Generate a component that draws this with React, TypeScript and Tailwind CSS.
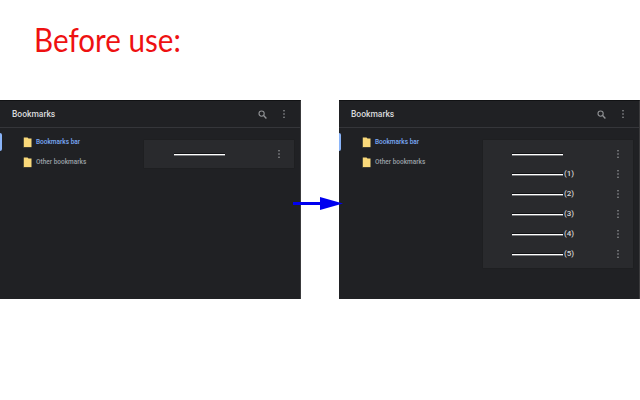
import React from "react";

const Dots = ({ color = "#9a9c9f" }: { color?: string }) => (
  <svg width="4" height="10" viewBox="0 0 4 10" className="block shrink-0">
    <circle cx="2" cy="1.7" r="0.8" fill={color} />
    <circle cx="2" cy="5" r="0.8" fill={color} />
    <circle cx="2" cy="8.3" r="0.8" fill={color} />
  </svg>
);

const Search = () => (
  <svg width="9" height="9" viewBox="0 0 9 9" className="block shrink-0" fill="none" stroke="#8f9194">
    <circle cx="3.6" cy="3.6" r="2.6" strokeWidth="1.1" />
    <path d="M5.6 5.6 L8.4 8.4" strokeWidth="1.4" />
  </svg>
);

const Folder = () => (
  <svg width="9" height="11" viewBox="0 0 9 11" className="block shrink-0">
    <path d="M1 0.5 H4.5 L5.5 1.5 H8.5 V10 H1 Z" fill="#fad97a" />
    <path d="M0.2 0.5 H1 V10 H8.5 V10.6 H0.2 Z" fill="#5f5a3c" />
  </svg>
);

const Row = ({ suffix, inset }: { suffix?: string; inset: string }) => (
  <div className={`h-5 flex items-center pr-[13px] ${inset}`}>
    <div className="w-[51px] h-px bg-white shadow-[0_1px_0_#77797c,0_-1px_0_#111214]" />
    <span className="ml-px flex-1 text-[8px] font-medium text-[#d4d5d6] font-['Roboto',sans-serif]">{suffix}</span>
    <Dots />
  </div>
);

const Panel = ({ rows, inset }: { rows: (string | undefined)[]; inset: string }) => (
  <div className="w-[301px] h-[199px] bg-[#202124] border-t border-t-[#111214] border-r border-r-[#3a3a3c] flex flex-col font-['Roboto',sans-serif]">
    <div className="h-[27px] shrink-0 flex items-center pl-3 pr-[14px] border-b border-[#35363a]">
      <span className="flex-1 text-[8.5px] font-medium text-[#d8d9db]">Bookmarks</span>
      <Search />
      <div className="ml-[15px]"><Dots /></div>
    </div>
    <div className="flex flex-1 items-start">
      <div className="w-[144px] shrink-0 flex flex-col pt-[5px]">
        <div className="h-[18px] flex items-center">
          <div className="w-[2px] h-[18px] bg-[#8ab4f8] rounded-r-sm" />
          <div className="ml-[21px]"><Folder /></div>
          <span className="ml-[4px] pt-px text-[6.5px] font-medium text-[#7baaf7]">Bookmarks bar</span>
        </div>
        <div className="h-[20px] mt-px flex items-center pl-[23px]">
          <Folder />
          <span className="ml-[4px] pt-px text-[6.5px] font-medium text-[#9aa0a6]">Other bookmarks</span>
        </div>
      </div>
      <div className="w-[150px] mt-[12px] py-[4px] bg-[#292a2d] shadow-[0_0_1px_#18191b]">
        {rows.map((s, i) => <Row key={i} suffix={s} inset={inset} />)}
      </div>
    </div>
  </div>
);

export default function App() {
  return (
    <div className="relative w-[640px] h-[400px] bg-white overflow-hidden flex flex-col">
      <h1 className="h-[100px] shrink-0 pl-[34px] pt-[17px] text-[32px] leading-[46px] font-normal text-[#ee1111] font-['Lato',sans-serif]">
        <span className="inline-block origin-left scale-x-[0.925]">Before use:</span>
      </h1>
      <div className="flex gap-[38px]">
        <Panel rows={[undefined]} inset="pl-[30px]" />
        <Panel rows={[undefined, "(1)", "(2)", "(3)", "(4)", "(5)"]} inset="pl-[29px]" />
      </div>
      <svg width="50" height="13" viewBox="0 0 50 13" className="absolute left-[293px] top-[197px]">
        <path d="M0 5 H27 V0 L50 6.5 L27 13 V8 H0 Z" fill="#0000f0" />
      </svg>
    </div>
  );
}
